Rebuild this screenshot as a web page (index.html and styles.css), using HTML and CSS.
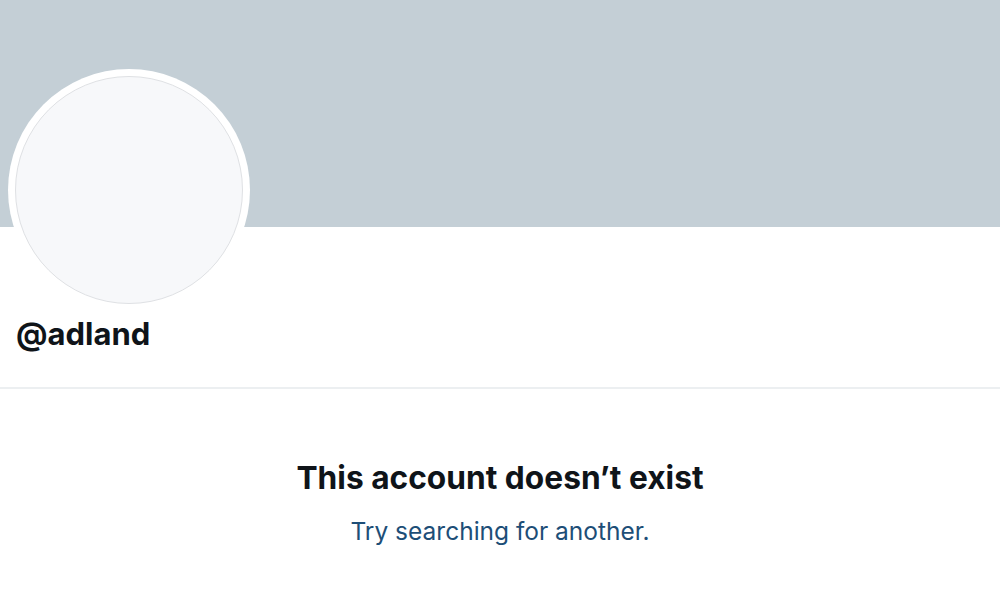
FILE: index.html
```html
<!DOCTYPE html>
<html>
<head>
<meta charset="utf-8">
<link rel="stylesheet" href="styles.css">
</head>
<body>
<div class="page">
  <div class="banner"></div>
  <div class="profile">
    <div class="avatar"><div class="avatar-inner"></div></div>
    <div class="handle">@adland</div>
  </div>
  <div class="empty">
    <div class="title">This account doesn’t exist</div>
    <div class="sub">Try searching for another.</div>
  </div>
</div>
</body>
</html>
```
FILE: styles.css
```css
html, body {
  margin: 0;
  padding: 0;
  background: #ffffff;
}
body {
  font-family: Inter, "Liberation Sans", sans-serif;
  width: 1000px;
  height: 597px;
  overflow: hidden;
}
.banner {
  height: 227px;
  background: #c4cfd6;
}
.profile {
  display: flex;
  flex-direction: column;
  align-items: flex-start;
  padding: 0 0 0 8px;
  border-bottom: 2px solid #eceff1;
  height: 162px;
  box-sizing: border-box;
}
.avatar {
  width: 242px;
  height: 242px;
  flex: none;
  border-radius: 50%;
  background: #ffffff;
  margin-top: -158px;
  display: flex;
  align-items: center;
  justify-content: center;
  position: relative;
}
.avatar-inner {
  width: 226px;
  height: 226px;
  border-radius: 50%;
  background: #f7f8fa;
  border: 1px solid #dfe1e4;
}
.handle {
  margin: 4px 0 0 8px;
  font-size: 31px;
  line-height: 38px;
  font-weight: 700;
  color: #0f1419;
}
.empty {
  display: flex;
  flex-direction: column;
  align-items: center;
  padding-top: 69px;
}
.title {
  font-size: 31.7px;
  line-height: 40px;
  font-weight: 700;
  color: #0f1419;
}
.sub {
  margin-top: 18px;
  font-size: 24.5px;
  line-height: 30px;
  color: #1d4e77;
}
```
